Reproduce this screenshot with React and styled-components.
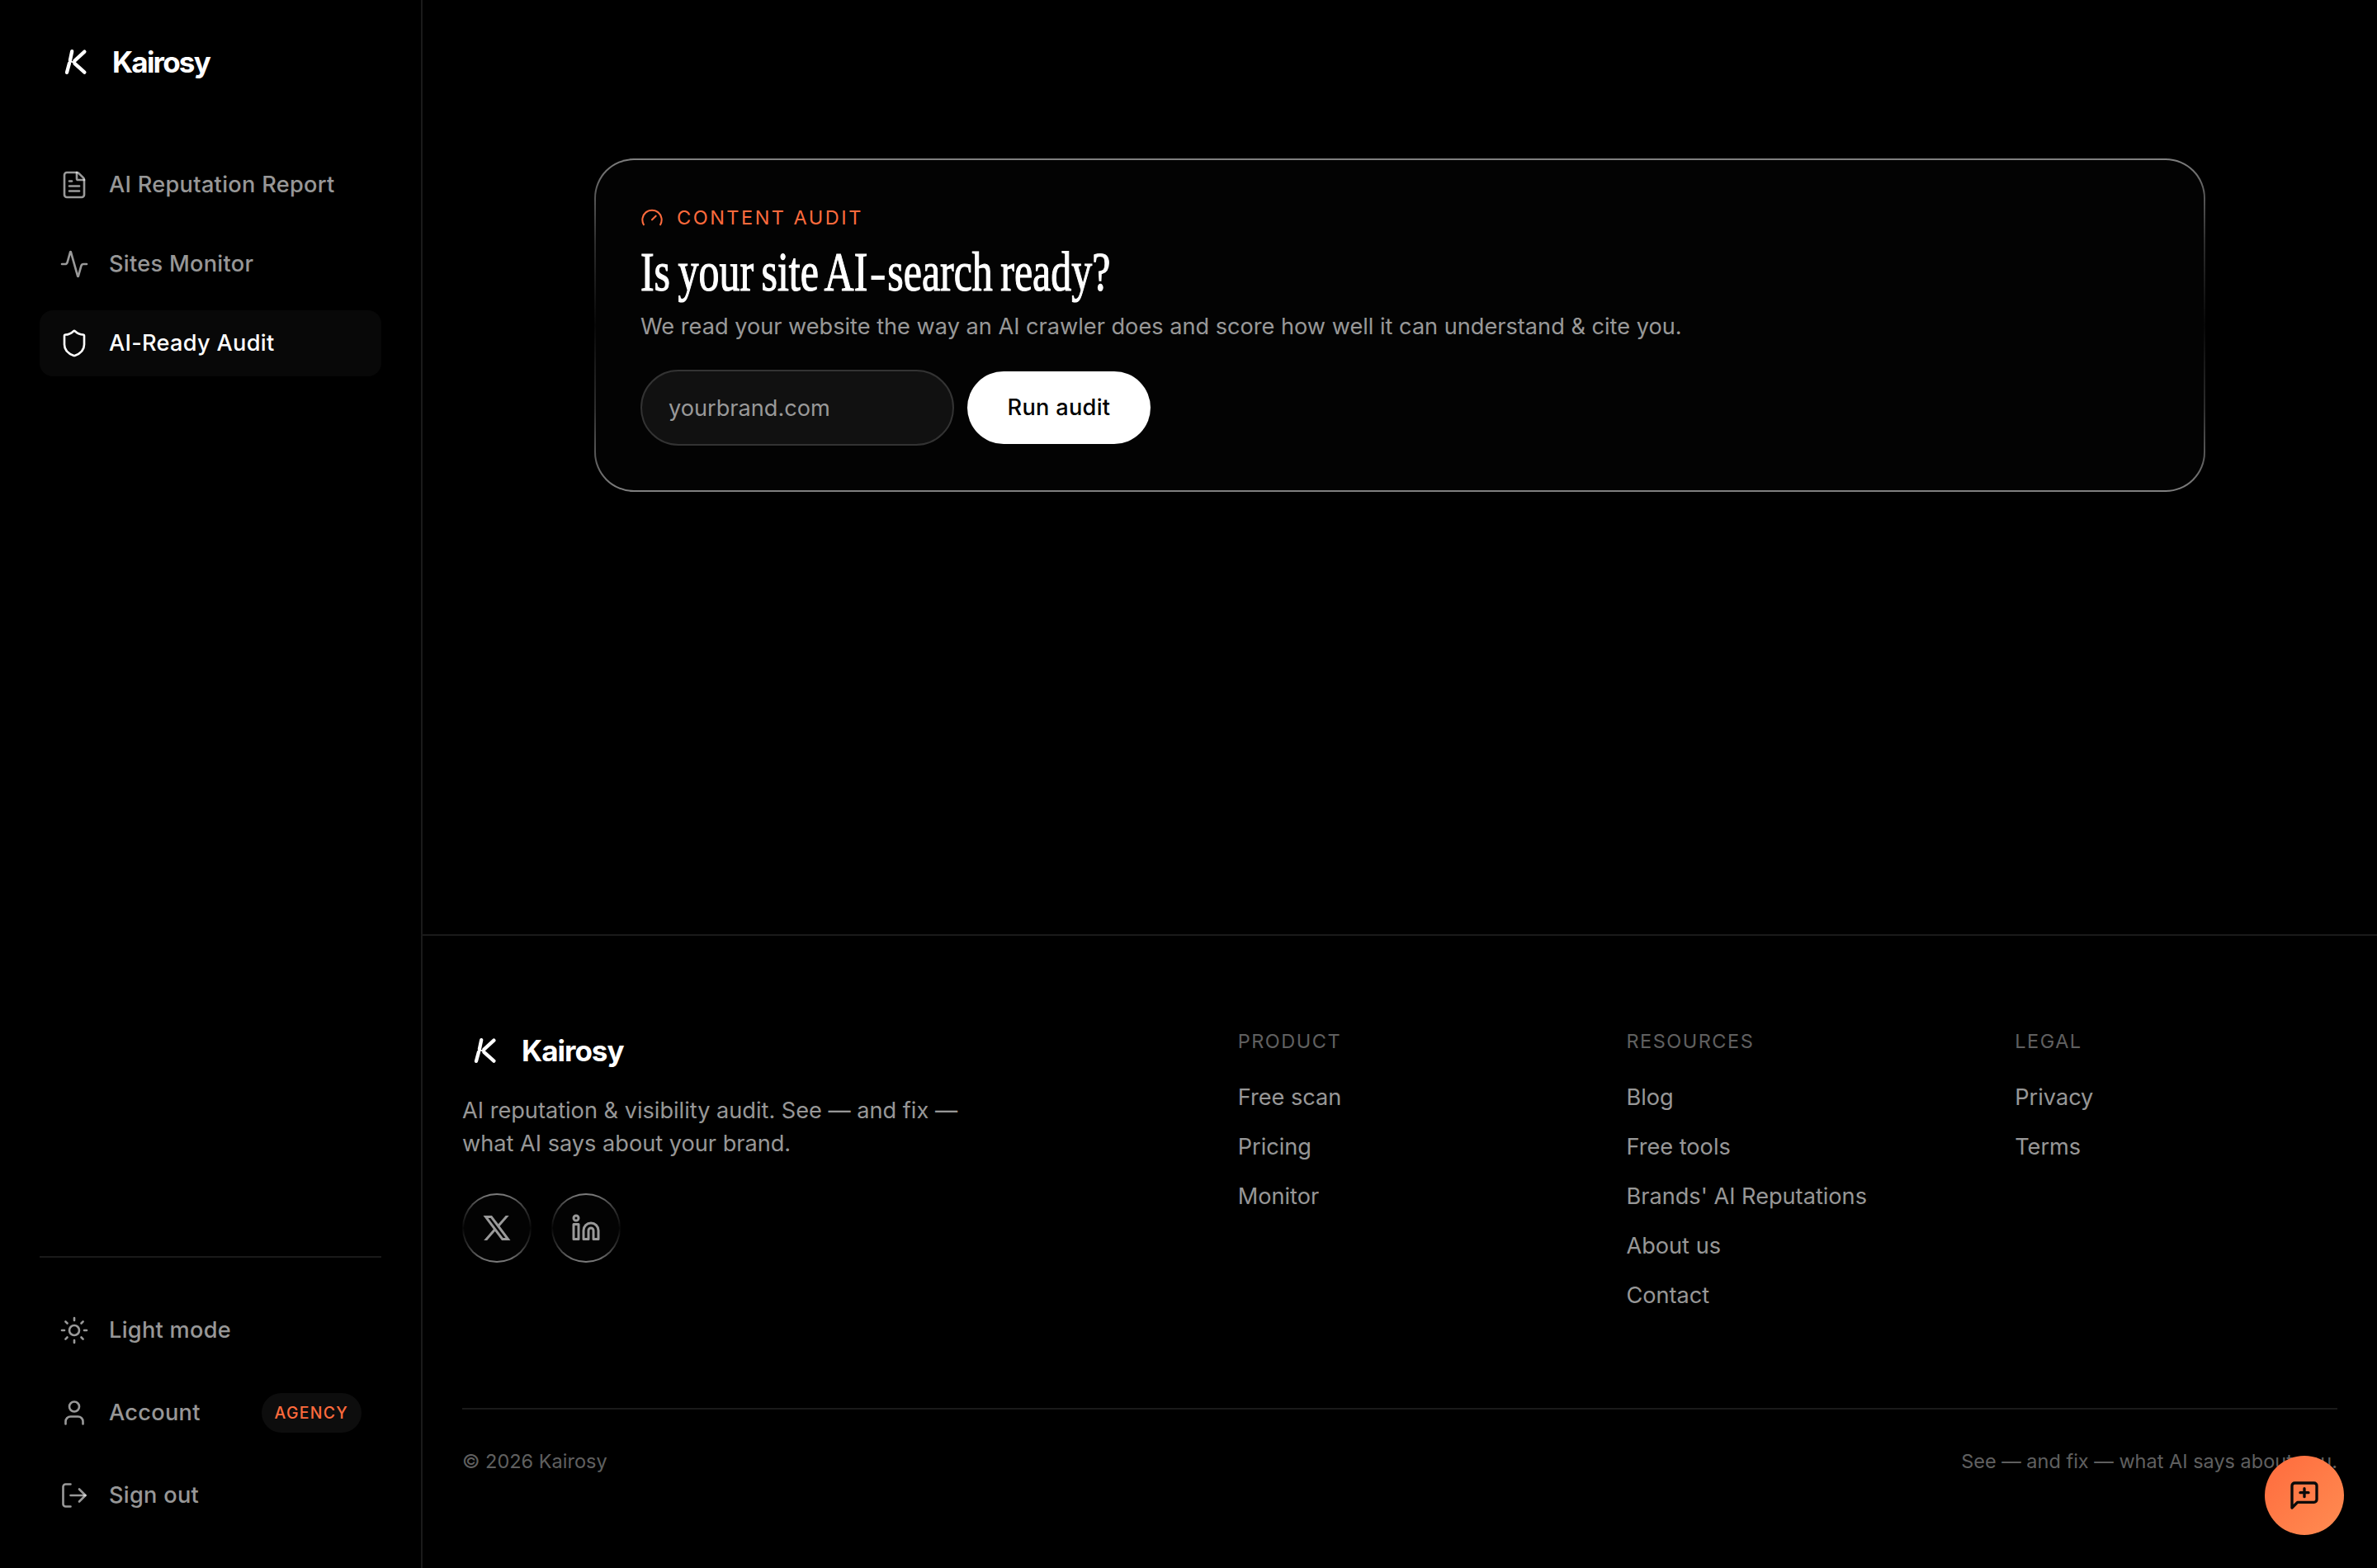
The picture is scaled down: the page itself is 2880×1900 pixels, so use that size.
import React from 'react'
import styled, {createGlobalStyle} from 'styled-components'
import {FileText, Activity, Shield, Sun, User, Gauge, Linkedin} from 'lucide-react'

const GlobalStyle = createGlobalStyle`
  * {
    box-sizing: border-box;
  }

  body {
    margin: 0;
    background: #000;
    color: #fff;
    font-family: Inter, "Liberation Sans", sans-serif;
    font-size: 27.15px;
    line-height: 40px;
  }
`;

const muted = 'rgba(255, 255, 255, 0.6)';
const faint = 'rgba(255, 255, 255, 0.39)';
const line = '#1a1a1a';
const accent = '#ff6b3d';

/* bright at the top and bottom edges, nearly gone halfway down */
const glassEdge = `
  border: 2px solid transparent;
  background:
    linear-gradient(#030303, #030303) padding-box,
    linear-gradient(180deg, #808080 0%, #555 12%, #2e2e2e 25%, #070707 50%, #2e2e2e 75%, #555 88%, #808080 100%) border-box;
`;

const Page = styled.div`
  display: flex;
  height: 1900px;
  overflow: hidden;
`;

const Sidebar = styled.aside`
  display: flex;
  flex-direction: column;
  width: 512px;
  flex-shrink: 0;
  padding: 48px;
  border-right: 2px solid ${line};
`;

const Brand = styled.div`
  display: flex;
  align-items: center;
  gap: 16px;
  height: 56px;
  padding-bottom: 2px;
  padding-left: ${(props) => props.$inset || 0}px;
  font-size: 35px;
  font-weight: 700;
  letter-spacing: ${(props) => (props.$inset ? '-1.8px' : '-1px')};

  svg {
    display: block;
    width: 56px;
    height: 56px;
  }
`;

const Nav = styled.nav`
  display: flex;
  flex-direction: column;
  gap: ${(props) => props.$gap}px;
`;

const TopNav = styled(Nav)`
  margin-top: 80px;
`;

const BottomNav = styled(Nav)`
  margin-top: auto;
  padding-top: 48px;
  border-top: 2px solid ${line};
`;

const NavItem = styled.a`
  display: flex;
  align-items: center;
  gap: 24px;
  height: 80px;
  padding: 0 24px;
  border-radius: 16px;
  font-weight: 500;
  letter-spacing: 0.3px;
  color: ${(props) => (props.$active ? '#fff' : muted)};
  background: ${(props) => (props.$active ? '#080808' : 'transparent')};
`;

const Badge = styled.span`
  display: flex;
  align-items: center;
  height: 48px;
  margin-left: auto;
  padding: 0 16px;
  border-radius: 24px;
  background: #0d0d0d;
  color: ${accent};
  font-size: 19.4px;
  letter-spacing: 1.3px;
`;

const Content = styled.div`
  display: flex;
  flex-direction: column;
  flex: 1;
`;

const Main = styled.main`
  height: 1132px;
  padding: 192px 208px 0;
`;

const Card = styled.section`
  ${glassEdge}
  height: 404px;
  padding: 54px;
  border-radius: 48px;
`;

const Eyebrow = styled.div`
  display: flex;
  align-items: center;
  gap: 16px;
  height: 32px;
  color: ${accent};
  font-size: 23.5px;
  letter-spacing: 2.5px;
`;

const Title = styled.h1`
  margin: 9px 0 7px;
  height: 80px;
  font-family: "Liberation Serif", serif;
  font-size: 67px;
  font-weight: 400;
  line-height: 81px;
  word-spacing: -4px;
  white-space: nowrap;
  -webkit-text-stroke: 1.2px #fff;
  transform: scaleX(0.745);
  transform-origin: left;
`;

const Hyphen = styled.span`
  display: inline-block;
  margin: 0 5px;
  -webkit-text-stroke: 0;
  transform: scaleX(1.25);
`;

const Lead = styled.p`
  margin: 0 0 32px;
  color: ${muted};
`;

const AuditForm = styled.form`
  display: flex;
  align-items: center;
  gap: 16px;
`;

const SiteInput = styled.input`
  width: 380px;
  height: 92px;
  padding: 0 32px;
  border: 2px solid #333;
  border-radius: 46px;
  background: #111;
  color: #fff;
  font: inherit;

  &::placeholder {
    color: #999;
  }
`;

const RunButton = styled.button`
  width: 222px;
  height: 88px;
  padding: 0;
  border: 0;
  border-radius: 44px;
  background: #fff;
  color: #000;
  font: inherit;
  font-weight: 500;
  letter-spacing: 0.3px;
`;

const Footer = styled.footer`
  flex: 1;
  padding: 112px 48px 0;
  border-top: 2px solid ${line};
`;

const FooterGrid = styled.div`
  display: grid;
  grid-template-columns: 2.2fr 1fr 1fr 1fr;
  column-gap: 80px;
  height: 460px;
`;

const Tagline = styled.p`
  width: 640px;
  margin: 24px 0 40px;
  color: ${muted};
`;

const Socials = styled.div`
  display: flex;
  gap: 24px;
`;

const SocialLink = styled.a`
  ${glassEdge}
  display: flex;
  align-items: center;
  justify-content: center;
  width: 84px;
  height: 84px;
  border-radius: 50%;
  color: #999;
`;

const ColumnTitle = styled.h2`
  margin: 0 0 32px;
  color: ${faint};
  font-size: 23.5px;
  font-weight: 400;
  line-height: 32px;
  letter-spacing: 1.5px;
`;

const LinkList = styled.ul`
  display: flex;
  flex-direction: column;
  gap: 20px;
  margin: 0;
  padding: 0;
  list-style: none;
  color: ${muted};
`;

const Legal = styled.div`
  display: flex;
  justify-content: space-between;
  padding-top: 46px;
  border-top: 2px solid ${line};
  color: ${faint};
  font-size: 23.5px;
  line-height: 34px;
`;

const FeedbackButton = styled.button`
  position: fixed;
  right: 40px;
  bottom: 40px;
  display: flex;
  align-items: center;
  justify-content: center;
  width: 96px;
  height: 96px;
  padding: 0;
  border: 0;
  border-radius: 50%;
  background: linear-gradient(135deg, #ff6b3d, #ff8c52);
  color: #0a0a0a;
`;

const LogoMark = () => (
    <svg viewBox="0 0 56 56" fill="none" stroke="#fff" strokeWidth="4.3" strokeLinecap="round">
        <path d="M23.2 15.2L20.9 26.2M20 29.6L17 40.8"/>
        <path d="M38.4 15.6L26.4 26.6M26.4 29.8L38.4 40.6"/>
        <path d="M22 27.9L27 28.4" strokeWidth="1.8"/>
    </svg>
);

const SignOutIcon = () => (
    <svg width="36" height="36" viewBox="0 0 24 24" fill="none" stroke="currentColor" strokeWidth="1.75"
         strokeLinecap="round" strokeLinejoin="round">
        <path d="M9 21H5a2 2 0 0 1-2-2V5a2 2 0 0 1 2-2h4"/>
        <path d="M16 17l5-5-5-5"/>
        <path d="M21 12H9"/>
    </svg>
);

const XIcon = () => (
    <svg width="36" height="36" viewBox="0 0 24 24" fill="currentColor">
        <path d="M8 2H1l8.26 11.01L1.45 22H4.1l6.39-7.35L16 22h7l-8.61-11.48L21.8 2h-2.65l-5.99 6.89L8 2zm9 18L5 4h2l12 16h-2z"/>
    </svg>
);

const FeedbackIcon = () => (
    <svg width="40" height="40" viewBox="0 0 24 24" fill="none" stroke="currentColor" strokeWidth="2"
         strokeLinecap="round" strokeLinejoin="round">
        <path d="M21 15a2 2 0 0 1-2 2H7l-4 4V5a2 2 0 0 1 2-2h14a2 2 0 0 1 2 2z"/>
        <path d="M12 7v6M9 10h6"/>
    </svg>
);

const columns = [
    {title: 'PRODUCT', links: ['Free scan', 'Pricing', 'Monitor']},
    {title: 'RESOURCES', links: ['Blog', 'Free tools', "Brands' AI Reputations", 'About us', 'Contact']},
    {title: 'LEGAL', links: ['Privacy', 'Terms']},
];

const icon = {size: 36, strokeWidth: 1.75};

const App = () => {
    return (
        <Page>
            <GlobalStyle/>
            <Sidebar>
                <Brand $inset={16}><LogoMark/>Kairosy</Brand>
                <TopNav $gap={16}>
                    <NavItem><FileText {...icon}/>AI Reputation Report</NavItem>
                    <NavItem><Activity {...icon}/>Sites Monitor</NavItem>
                    <NavItem $active><Shield {...icon}/>AI-Ready Audit</NavItem>
                </TopNav>
                <BottomNav $gap={20}>
                    <NavItem><Sun {...icon}/>Light mode</NavItem>
                    <NavItem><User {...icon}/>Account<Badge>AGENCY</Badge></NavItem>
                    <NavItem><SignOutIcon/>Sign out</NavItem>
                </BottomNav>
            </Sidebar>

            <Content>
                <Main>
                    <Card>
                        <Eyebrow><Gauge size={28} strokeWidth={1.75}/>CONTENT AUDIT</Eyebrow>
                        <Title>Is your site AI<Hyphen>-</Hyphen>search ready?</Title>
                        <Lead>We read your website the way an AI crawler does and score how well it can understand &amp; cite you.</Lead>
                        <AuditForm>
                            <SiteInput placeholder="yourbrand.com"/>
                            <RunButton type="button">Run audit</RunButton>
                        </AuditForm>
                    </Card>
                </Main>

                <Footer>
                    <FooterGrid>
                        <div>
                            <Brand><LogoMark/>Kairosy</Brand>
                            <Tagline>AI reputation &amp; visibility audit. See — and fix — what AI says about your brand.</Tagline>
                            <Socials>
                                <SocialLink><XIcon/></SocialLink>
                                <SocialLink><Linkedin size={36} strokeWidth={2}/></SocialLink>
                            </Socials>
                        </div>
                        {columns.map(column => (
                            <div key={column.title}>
                                <ColumnTitle>{column.title}</ColumnTitle>
                                <LinkList>
                                    {column.links.map(link => <li key={link}>{link}</li>)}
                                </LinkList>
                            </div>
                        ))}
                    </FooterGrid>
                    <Legal>
                        <span>© 2026 Kairosy</span>
                        <span>See — and fix — what AI says about you.</span>
                    </Legal>
                </Footer>
            </Content>

            <FeedbackButton><FeedbackIcon/></FeedbackButton>
        </Page>
    )
}

export default App;
